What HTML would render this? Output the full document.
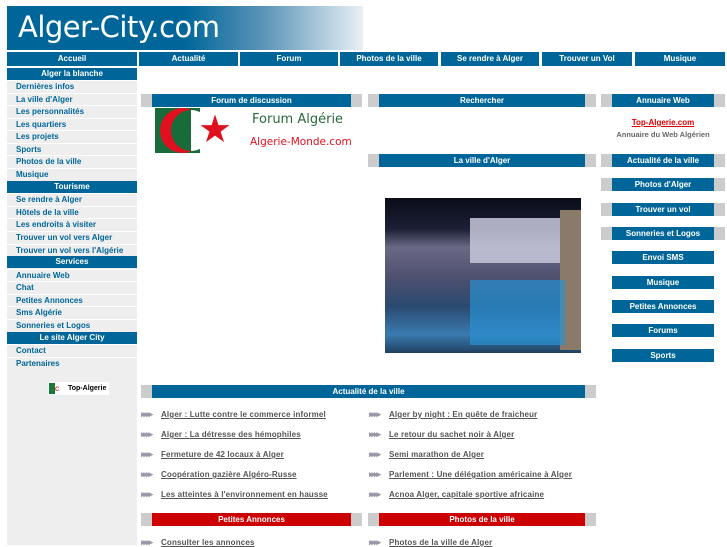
<!DOCTYPE html>
<html><head><meta charset="utf-8"><style>
*{margin:0;padding:0;box-sizing:border-box}
body{width:727px;height:545px;overflow:hidden;background:#fff;font-family:"Liberation Sans",Arial,sans-serif;position:relative}
.a{position:absolute}
.b{position:absolute;background:#006699;color:#fff;font-weight:bold;font-size:8px;text-align:center;line-height:13px;height:13px}
.r{background:#cc0000}
.g{position:absolute;background:#ccc;height:13px}
.it{position:absolute;left:7px;width:130px;height:12px;background:#eee;color:#006699;font-weight:bold;font-size:8px;line-height:12px;padding-left:9px;border-top:1px solid #fff}
.lk{position:absolute;font-size:8px;font-weight:bold;color:#555;white-space:nowrap;letter-spacing:0.15px}
.lk u{text-decoration:underline}
.ar{color:#99a;letter-spacing:-2px;font-size:9px;display:inline-block;width:20px;overflow:hidden;vertical-align:top;line-height:9px}
</style></head><body>
<div class="a" style="left:7px;top:6px;width:356px;height:44px;background:linear-gradient(90deg,#006699 0%,#006699 50%,#5b94b8 72%,#e8f0f5 100%)"></div>
<div class="a" style="left:18px;top:6px;color:#fff;font-size:29px;line-height:42px;font-family:'DejaVu Sans',sans-serif;letter-spacing:-0.5px">Alger-City.com</div>

<div class="b" style="left:7px;top:52px;width:130px;height:14px;line-height:14px">Accueil</div>
<div class="b" style="left:139px;top:52px;width:99px;height:14px;line-height:14px">Actualité</div>
<div class="b" style="left:240px;top:52px;width:98px;height:14px;line-height:14px">Forum</div>
<div class="b" style="left:340px;top:52px;width:98px;height:14px;line-height:14px">Photos de la ville</div>
<div class="b" style="left:441px;top:52px;width:98px;height:14px;line-height:14px">Se rendre à Alger</div>
<div class="b" style="left:542px;top:52px;width:90px;height:14px;line-height:14px">Trouver un Vol</div>
<div class="b" style="left:635px;top:52px;width:90px;height:14px;line-height:14px">Musique</div>

<div class="a" style="left:7px;top:68px;width:130px;height:477px;background:#eee"></div>
<div class="b" style="left:7px;top:68px;width:130px;height:12px;line-height:12px">Alger la blanche</div>
<div class="it" style="top:80px">Dernières infos</div>
<div class="it" style="top:93px">La ville d'Alger</div>
<div class="it" style="top:105px">Les personnalités</div>
<div class="it" style="top:118px">Les quartiers</div>
<div class="it" style="top:130px">Les projets</div>
<div class="it" style="top:143px">Sports</div>
<div class="it" style="top:155px">Photos de la ville</div>
<div class="it" style="top:168px">Musique</div>
<div class="b" style="left:7px;top:181px;width:130px;height:12px;line-height:12px">Tourisme</div>
<div class="it" style="top:193px">Se rendre à Alger</div>
<div class="it" style="top:206px">Hôtels de la ville</div>
<div class="it" style="top:218px">Les endroits à visiter</div>
<div class="it" style="top:231px">Trouver un vol vers Alger</div>
<div class="it" style="top:244px">Trouver un vol vers l'Algérie</div>
<div class="b" style="left:7px;top:256px;width:130px;height:12px;line-height:12px">Services</div>
<div class="it" style="top:269px">Annuaire Web</div>
<div class="it" style="top:281px">Chat</div>
<div class="it" style="top:294px">Petites Annonces</div>
<div class="it" style="top:306px">Sms Algérie</div>
<div class="it" style="top:319px">Sonneries et Logos</div>
<div class="b" style="left:7px;top:332px;width:130px;height:12px;line-height:12px">Le site Alger City</div>
<div class="it" style="top:344px">Contact</div>
<div class="it" style="top:357px">Partenaires</div>
<div class="a" style="left:48px;top:382px;width:61px;height:13px;background:#fff;font-size:7px;font-weight:bold;line-height:13px;padding-left:20px">Top-Algerie</div>
<div class="a" style="left:49px;top:383px;width:6px;height:11px;background:#1a7a3a"></div>
<div class="a" style="left:55px;top:383px;width:6px;height:11px;background:#fff;color:#d00;font-size:8px;line-height:11px">c</div>

<div class="g" style="left:141px;top:94px;width:221px"></div><div class="b" style="left:152px;top:94px;width:199px">Forum de discussion</div>
<div class="g" style="left:368px;top:94px;width:228px"></div><div class="b" style="left:379px;top:94px;width:206px">Rechercher</div>
<div class="g" style="left:601px;top:94px;width:124px"></div><div class="b" style="left:612px;top:94px;width:102px">Annuaire Web</div>

<div class="a" style="left:155px;top:108px;width:45px;height:45px;background:#1a6b3a"></div>
<div class="a" style="left:200px;top:108px;width:35px;height:45px;background:#fff"></div>
<div class="a" style="left:160px;top:108px;width:45px;height:45px;border-radius:50%;background:#e0101e"></div>
<div class="a" style="left:171px;top:110px;width:40px;height:41px;border-radius:50%;background:linear-gradient(90deg,#1a6b3a 50%,#fff 50%)"></div>
<div class="a" style="left:198px;top:110px;color:#e0101e;font-size:38px;line-height:40px">★</div>
<div class="a" style="left:252px;top:112px;color:#2a6a3a;font-size:13px;font-family:'DejaVu Sans',sans-serif">Forum Algérie</div>
<div class="a" style="left:250px;top:136px;color:#e0101e;font-size:10.5px;font-family:'DejaVu Sans',sans-serif">Algerie-Monde.com</div>

<div class="a" style="left:601px;top:118px;width:124px;text-align:center;font-size:8px;font-weight:bold;color:#d00;text-decoration:underline">Top-Algerie.com</div>
<div class="a" style="left:601px;top:130px;width:124px;text-align:center;font-size:7.5px;font-weight:bold;color:#666">Annuaire du Web Algérien</div>

<div class="g" style="left:368px;top:154px;width:228px"></div><div class="b" style="left:379px;top:154px;width:206px">La ville d'Alger</div>
<div class="g" style="left:601px;top:154px;width:124px"></div><div class="b" style="left:612px;top:154px;width:102px">Actualité de la ville</div>
<div class="g" style="left:601px;top:178px;width:124px"></div><div class="b" style="left:612px;top:178px;width:102px">Photos d'Alger</div>
<div class="g" style="left:601px;top:203px;width:124px"></div><div class="b" style="left:612px;top:203px;width:102px">Trouver un vol</div>
<div class="g" style="left:601px;top:227px;width:124px"></div><div class="b" style="left:612px;top:227px;width:102px">Sonneries et Logos</div>
<div class="b" style="left:612px;top:251px;width:102px">Envoi SMS</div>
<div class="b" style="left:612px;top:276px;width:102px">Musique</div>
<div class="b" style="left:612px;top:300px;width:102px">Petites Annonces</div>
<div class="b" style="left:612px;top:324px;width:102px">Forums</div>
<div class="b" style="left:612px;top:349px;width:102px">Sports</div>

<div class="a" style="left:385px;top:198px;width:196px;height:155px;background:linear-gradient(180deg,#0a0c18 0%,#1c2036 20%,#6a6a86 32%,#505070 50%,#2a4a70 70%,#3a7ab0 88%,#204060 100%)"></div>
<div class="a" style="left:470px;top:218px;width:95px;height:45px;background:#c8c8dc;opacity:.85"></div>
<div class="a" style="left:560px;top:210px;width:21px;height:140px;background:#8a7a6a"></div>
<div class="a" style="left:470px;top:280px;width:95px;height:65px;background:#2a90d0;opacity:.7"></div>

<div class="g" style="left:141px;top:385px;width:455px"></div><div class="b" style="left:152px;top:385px;width:433px">Actualité de la ville</div>

<div class="lk" style="left:141px;top:410px"><span class="ar">▸▸▸▸</span><u>Alger : Lutte contre le commerce informel</u></div>
<div class="lk" style="left:141px;top:430px"><span class="ar">▸▸▸▸</span><u>Alger : La détresse des hémophiles</u></div>
<div class="lk" style="left:141px;top:450px"><span class="ar">▸▸▸▸</span><u>Fermeture de 42 locaux à Alger</u></div>
<div class="lk" style="left:141px;top:470px"><span class="ar">▸▸▸▸</span><u>Coopération gazière Algéro-Russe</u></div>
<div class="lk" style="left:141px;top:490px"><span class="ar">▸▸▸▸</span><u>Les atteintes à l'environnement en hausse</u></div>
<div class="lk" style="left:369px;top:410px"><span class="ar">▸▸▸▸</span><u>Alger by night : En quête de fraicheur</u></div>
<div class="lk" style="left:369px;top:430px"><span class="ar">▸▸▸▸</span><u>Le retour du sachet noir à Alger</u></div>
<div class="lk" style="left:369px;top:450px"><span class="ar">▸▸▸▸</span><u>Semi marathon de Alger</u></div>
<div class="lk" style="left:369px;top:470px"><span class="ar">▸▸▸▸</span><u>Parlement : Une délégation américaine à Alger</u></div>
<div class="lk" style="left:369px;top:490px"><span class="ar">▸▸▸▸</span><u>Acnoa Alger, capitale sportive africaine</u></div>

<div class="g" style="left:141px;top:513px;width:221px"></div><div class="b r" style="left:152px;top:513px;width:199px">Petites Annonces</div>
<div class="g" style="left:368px;top:513px;width:228px"></div><div class="b r" style="left:379px;top:513px;width:206px">Photos de la ville</div>
<div class="lk" style="left:141px;top:538px"><span class="ar">▸▸▸▸</span><u>Consulter les annonces</u></div>
<div class="lk" style="left:369px;top:538px"><span class="ar">▸▸▸▸</span><u>Photos de la ville de Alger</u></div>
</body></html>
